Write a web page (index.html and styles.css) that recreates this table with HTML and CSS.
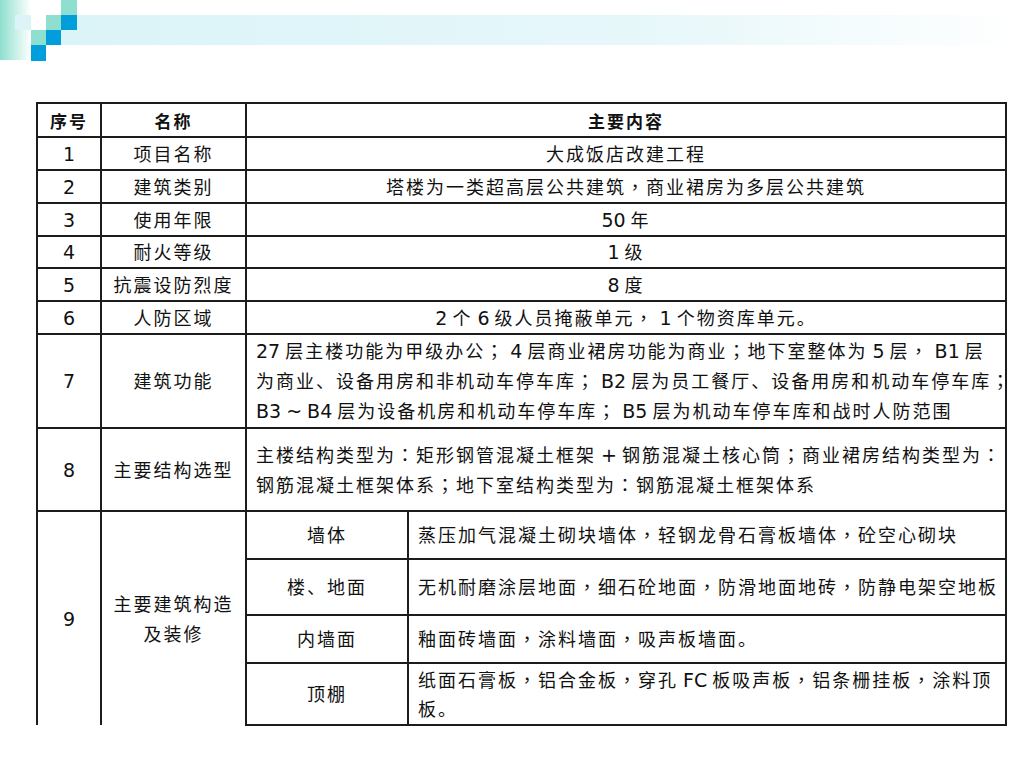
FILE: index.html
```html
<!DOCTYPE html>
<html lang="zh-CN">
<head>
<meta charset="utf-8">
<title>工程概况</title>
<link rel="stylesheet" href="styles.css">
</head>
<body>
<div class="banner">
  <svg class="banner-art" width="1024" height="61" viewBox="0 0 1024 61" xmlns="http://www.w3.org/2000/svg">
    <defs>
      <linearGradient id="tile" x1="0" y1="0" x2="1" y2="0">
        <stop offset="0" stop-color="#8edfcf"/>
        <stop offset="1" stop-color="#ffffff"/>
      </linearGradient>
      <linearGradient id="band" x1="0" y1="0" x2="1" y2="0">
        <stop offset="0" stop-color="#dbf4f8"/>
        <stop offset="0.6" stop-color="#e6f7fa"/>
        <stop offset="1" stop-color="#ffffff"/>
      </linearGradient>
    </defs>
    <rect x="0" y="0" width="31" height="60" fill="url(#tile)"/>
    <rect x="61" y="15" width="963" height="30" fill="url(#band)"/>
    <rect x="15" y="15" width="16" height="15" fill="#dcf4f8"/>
    <rect x="61" y="0" width="16" height="15" fill="#8edfcf"/>
    <rect x="46" y="15" width="15" height="15" fill="#8edfcf"/>
    <rect x="31" y="30" width="15" height="15" fill="#8edfcf"/>
    <rect x="61" y="15" width="16" height="15" fill="#009fdb"/>
    <rect x="46" y="30" width="15" height="15" fill="#009fdb"/>
    <rect x="31" y="45" width="15" height="16" fill="#009fdb"/>
  </svg>
</div>

<main class="content">
  <table class="info">
    <colgroup>
      <col class="c-no">
      <col class="c-name">
      <col class="c-sub">
      <col class="c-desc">
    </colgroup>
    <thead>
      <tr class="r-head">
        <th>序号</th>
        <th>名称</th>
        <th colspan="2">主要内容</th>
      </tr>
    </thead>
    <tbody>
      <tr class="r-std"><td><span class="n">1</span></td><td>项目名称</td><td colspan="2">大成饭店改建工程</td></tr>
      <tr class="r-std"><td><span class="n">2</span></td><td>建筑类别</td><td colspan="2">塔楼为一类超高层公共建筑<span class="p" lang="zh-TW">，</span>商业裙房为多层公共建筑</td></tr>
      <tr class="r-std"><td><span class="n">3</span></td><td>使用年限</td><td colspan="2"><span class="n">50 </span>年</td></tr>
      <tr class="r-short"><td><span class="n">4</span></td><td>耐火等级</td><td colspan="2"><span class="n">1 </span>级</td></tr>
      <tr class="r-std"><td><span class="n">5</span></td><td>抗震设防烈度</td><td colspan="2"><span class="n">8 </span>度</td></tr>
      <tr class="r-std"><td><span class="n">6</span></td><td>人防区域</td><td colspan="2"><span class="n">2 </span>个<span class="n"> 6 </span>级人员掩蔽单元<span class="p" lang="zh-TW">，</span><span class="n"> 1 </span>个物资库单元。</td></tr>
      <tr class="r-func">
        <td><span class="n">7</span></td><td>建筑功能</td>
        <td colspan="2" class="left multi"><span class="n">27 </span>层主楼功能为甲级办公<span class="p" lang="zh-TW">；</span><span class="n"> 4 </span>层商业裙房功能为商业<span class="p" lang="zh-TW">；</span>地下室整体为<span class="n"> 5 </span>层<span class="p" lang="zh-TW">，</span><span class="n"> B1 </span>层<br>为商业、设备用房和非机动车停车库<span class="p" lang="zh-TW">；</span><span class="n"> B2 </span>层为员工餐厅、设备用房和机动车停车库<span class="p" lang="zh-TW">；</span><br><span class="n">B3 ~ B4 </span>层为设备机房和机动车停车库<span class="p" lang="zh-TW">；</span><span class="n"> B5 </span>层为机动车停车库和战时人防范围</td>
      </tr>
      <tr class="r-struct">
        <td><span class="n">8</span></td><td>主要结构选型</td>
        <td colspan="2" class="left multi">主楼结构类型为<span class="p" lang="zh-TW">：</span>矩形钢管混凝土框架<span class="n"> + </span>钢筋混凝土核心筒<span class="p" lang="zh-TW">；</span>商业裙房结构类型为<span class="p" lang="zh-TW">：</span><br>钢筋混凝土框架体系<span class="p" lang="zh-TW">；</span>地下室结构类型为<span class="p" lang="zh-TW">：</span>钢筋混凝土框架体系</td>
      </tr>
      <tr class="r-wall">
        <td rowspan="4" class="open-bottom"><span class="n">9</span></td>
        <td rowspan="4" class="open-bottom multi">主要建筑构造<br>及装修</td>
        <td>墙体</td>
        <td class="left">蒸压加气混凝土砌块墙体<span class="p" lang="zh-TW">，</span>轻钢龙骨石膏板墙体<span class="p" lang="zh-TW">，</span>砼空心砌块</td>
      </tr>
      <tr class="r-floor">
        <td>楼、地面</td>
        <td class="left">无机耐磨涂层地面<span class="p" lang="zh-TW">，</span>细石砼地面<span class="p" lang="zh-TW">，</span>防滑地面地砖<span class="p" lang="zh-TW">，</span>防静电架空地板</td>
      </tr>
      <tr class="r-inner">
        <td>内墙面</td>
        <td class="left">釉面砖墙面<span class="p" lang="zh-TW">，</span>涂料墙面<span class="p" lang="zh-TW">，</span>吸声板墙面。</td>
      </tr>
      <tr class="r-ceil">
        <td>顶棚</td>
        <td class="left tight">纸面石膏板<span class="p" lang="zh-TW">，</span>铝合金板<span class="p" lang="zh-TW">，</span>穿孔<span class="n"> FC </span>板吸声板<span class="p" lang="zh-TW">，</span>铝条栅挂板<span class="p" lang="zh-TW">，</span>涂料顶<br>板。</td>
      </tr>
    </tbody>
  </table>
</main>
</body>
</html>
```

FILE: styles.css
```css
html, body {
  margin: 0;
  padding: 0;
  background: #ffffff;
}

body {
  width: 1024px;
  height: 768px;
  overflow: hidden;
  font-family: "DejaVu Sans", "Noto Sans CJK SC", sans-serif;
  color: #111111;
}

.banner {
  height: 61px;
}

.banner-art {
  display: block;
}

.content {
  padding: 41px 0 0 36px;
}

.info {
  border-collapse: collapse;
  table-layout: fixed;
  width: 969px;
  font-size: 18px;
  letter-spacing: 2px;
}

.c-no { width: 64px; }
.c-name { width: 145px; }
.c-sub { width: 162px; }
.c-desc { width: 598px; }

.info th,
.info td {
  border: 2px solid #1c1c1c;
  padding: 2px 6px 0;
  text-align: center;
  vertical-align: middle;
  white-space: nowrap;
  line-height: 22px;
}

.info th {
  font-weight: bold;
  font-size: 17px;
  padding-top: 3px;
}

.n {
  font-size: 19px;
  letter-spacing: 0;
  word-spacing: -1px;
  line-height: 1;
}

.p {
  font-family: "Noto Sans CJK TC", "Noto Sans CJK SC", sans-serif;
  line-height: 1;
}

.info td.left {
  text-align: left;
  padding-left: 9px;
}

.info td.multi {
  line-height: 30px;
}

.info td.tight {
  line-height: 29px;
}

.info td.open-bottom {
  border-bottom: none;
}

.r-head { height: 34px; }
.r-std { height: 33px; }
.r-short { height: 32px; }
.r-func { height: 94px; }
.r-struct { height: 83px; }
.r-wall { height: 48px; }
.r-floor { height: 56px; }
.r-inner { height: 48px; }
.r-ceil { height: 62px; }
```
